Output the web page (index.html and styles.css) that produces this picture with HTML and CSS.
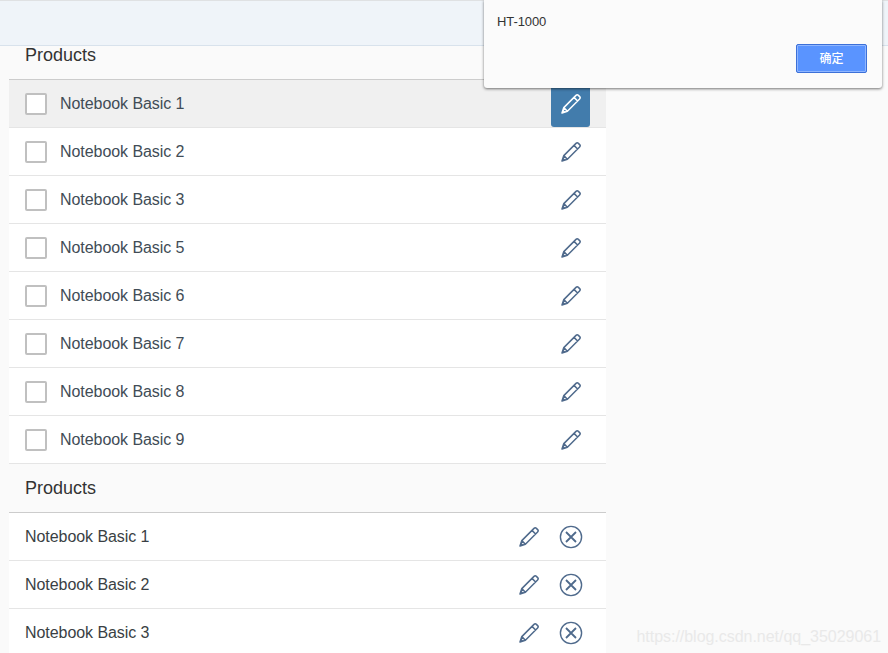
FILE: index.html
```html
<!DOCTYPE html>
<html lang="en">
<head>
<meta charset="utf-8">
<title>Products</title>
<link rel="stylesheet" href="styles.css">
</head>
<body>
<svg class="defs" width="0" height="0" aria-hidden="true">
  <symbol id="pencil" viewBox="0 0 20 20">
    <path d="M15 1.4 a1.7 1.7 0 0 1 2.4 0 l1.2 1.2 a1.7 1.7 0 0 1 0 2.4 L6.4 17.2 L1 19 L2.8 13.6 Z M13 3.4 L16.6 7 M2.8 13.6 L6.4 17.2" fill="none" stroke="currentColor" stroke-width="1.5" stroke-linejoin="round"/>
    <path d="M1 19 L2.1 15.6 L4.4 17.9 Z" fill="currentColor"/>
  </symbol>
  <symbol id="decline" viewBox="0 0 24 24">
    <circle cx="12" cy="12" r="10.6" fill="none" stroke="currentColor" stroke-width="1.4"/>
    <path d="M7 7 L17 17 M17 7 L7 17" fill="none" stroke="currentColor" stroke-width="1.8"/>
  </symbol>
</svg>
<header class="topbar"></header>
<main class="content">
  <section class="list">
    <h2 class="list-title first">Products</h2>
    <ul class="rows">
      <li class="row selected"><span class="check"></span><span class="name">Notebook Basic 1</span><button class="act active"><svg class="pen"><use href="#pencil"/></svg></button></li>
      <li class="row"><span class="check"></span><span class="name">Notebook Basic 2</span><button class="act"><svg class="pen"><use href="#pencil"/></svg></button></li>
      <li class="row"><span class="check"></span><span class="name">Notebook Basic 3</span><button class="act"><svg class="pen"><use href="#pencil"/></svg></button></li>
      <li class="row"><span class="check"></span><span class="name">Notebook Basic 5</span><button class="act"><svg class="pen"><use href="#pencil"/></svg></button></li>
      <li class="row"><span class="check"></span><span class="name">Notebook Basic 6</span><button class="act"><svg class="pen"><use href="#pencil"/></svg></button></li>
      <li class="row"><span class="check"></span><span class="name">Notebook Basic 7</span><button class="act"><svg class="pen"><use href="#pencil"/></svg></button></li>
      <li class="row"><span class="check"></span><span class="name">Notebook Basic 8</span><button class="act"><svg class="pen"><use href="#pencil"/></svg></button></li>
      <li class="row"><span class="check"></span><span class="name">Notebook Basic 9</span><button class="act"><svg class="pen"><use href="#pencil"/></svg></button></li>
    </ul>
  </section>
  <section class="list">
    <h2 class="list-title">Products</h2>
    <ul class="rows">
      <li class="row plain"><span class="name">Notebook Basic 1</span><button class="act wide"><svg class="pen"><use href="#pencil"/></svg></button><button class="act"><svg class="del"><use href="#decline"/></svg></button></li>
      <li class="row plain"><span class="name">Notebook Basic 2</span><button class="act wide"><svg class="pen"><use href="#pencil"/></svg></button><button class="act"><svg class="del"><use href="#decline"/></svg></button></li>
      <li class="row plain"><span class="name">Notebook Basic 3</span><button class="act wide"><svg class="pen"><use href="#pencil"/></svg></button><button class="act"><svg class="del"><use href="#decline"/></svg></button></li>
    </ul>
  </section>
</main>
<div class="dialog">
  <p class="dialog-text">HT-1000</p>
  <div class="dialog-actions"><button class="ok">确定</button></div>
</div>
<div class="watermark">https://blog.csdn.net/qq_35029061</div>
</body>
</html>
```
FILE: styles.css
```css
* { box-sizing: border-box; }
html, body { margin: 0; height: 100%; }
body {
  background: #fafafa;
  font-family: "Liberation Sans", Arial, sans-serif;
  color: #333;
  overflow: hidden;
  position: relative;
}
.defs { position: absolute; }
.topbar {
  height: 46px;
  background: #eff4f9;
  border-top: 1px solid #dfe1e3;
  border-bottom: 1px solid #d8e2ec;
}
.content { width: 606px; padding-left: 9px; }
.list-title {
  margin: 0;
  height: 49px;
  padding: 0 16px;
  display: flex;
  align-items: center;
  font-size: 18px;
  font-weight: 400;
  color: #333;
  border-bottom: 1px solid #ccc;
}
.list-title.first { height: 34px; padding-bottom: 14px; }
.rows { list-style: none; margin: 0; padding: 0; }
.row {
  height: 48px;
  display: flex;
  align-items: center;
  padding: 0 16px;
  background: #fff;
  border-bottom: 1px solid #e5e5e5;
  position: relative;
}
.row.selected { background: #f0f0f0; }
.check {
  width: 22px;
  height: 22px;
  margin-right: 13px;
  background: #fff;
  border: 2px solid #c0c0c0;
  border-radius: 2px;
}
.name { flex: 1; font-size: 16px; letter-spacing: -0.06px; color: #414c56; }
.row.plain .name { color: #3a3f44; }
.act {
  width: 39px;
  height: 47px;
  padding: 1px 0 0;
  border: 0;
  background: transparent;
  color: #4f6a8c;
  display: flex;
  align-items: center;
  justify-content: center;
}
.act.wide { width: 44px; }
.act.active { background: #427cac; color: #fff; border-radius: 0 0 3px 3px; }
.pen { width: 20px; height: 20px; }
.del { width: 24px; height: 24px; }
.dialog {
  position: absolute;
  left: 484px;
  top: 0;
  width: 398px;
  height: 88px;
  background: #fbfbfb;
  border-radius: 0 0 3px 3px;
  box-shadow: 0 1px 3px rgba(0, 0, 0, 0.55);
  padding: 14px 15px 15px 13px;
}
.dialog-text { margin: 0; font-size: 13px; letter-spacing: -0.1px; line-height: 15px; color: #333; }
.dialog-actions { display: flex; justify-content: flex-end; margin-top: 15px; }
.ok {
  width: 71px;
  height: 29px;
  background: #5a94ff;
  border: 1px solid #3c70d8;
  box-shadow: inset 0 0 0 1px #8fb6ff;
  border-radius: 2px;
  color: #fff;
  font-family: "Noto Sans CJK SC", sans-serif;
  font-size: 12px;
  font-weight: 500;
  line-height: 25px;
  padding: 0 0 2px 0;
}
.watermark {
  position: absolute;
  right: 7px;
  bottom: 7px;
  font-size: 16px;
  letter-spacing: -0.03px;
  color: #e9e9e9;
}
```
